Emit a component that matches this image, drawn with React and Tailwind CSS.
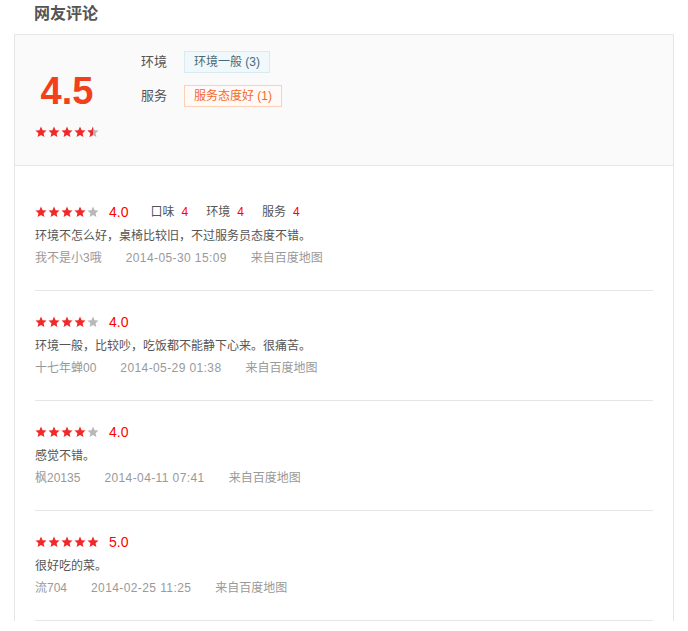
const reviews = [
  {
    score: 4,
    scores: [
      ['口味', 4],
      ['环境', 4],
      ['服务', 4],
    ],
    text: '环境不怎么好，桌椅比较旧，不过服务员态度不错。',
    user: '我不是小3哦',
    time: '2014-05-30 15:09',
  },
  {
    score: 4,
    text: '环境一般，比较吵，吃饭都不能静下心来。很痛苦。',
    user: '十七年蝉00',
    time: '2014-05-29 01:38',
  },
  {
    score: 4,
    text: '感觉不错。',
    user: '枫20135',
    time: '2014-04-11 07:41',
  },
  {
    score: 5,
    text: '很好吃的菜。',
    user: '流704',
    time: '2014-02-25 11:25',
  },
];

const STAR = 'M6 0.6l1.6 3.6 3.9 0.4-2.9 2.6 0.8 3.9L6 9.1 2.6 11.1l0.8-3.9L0.5 4.6l3.9-0.4z';

const Star = ({ fill = 1 }) => (
  <svg width="12" height="12" viewBox="0 0 12 12" className="block">
    <defs>
      <clipPath id="half">
        <rect x="0" y="0" width="6" height="12" />
      </clipPath>
    </defs>
    <path d={STAR} fill={fill === 1 ? '#f02a2a' : '#b8b8b8'} />
    {fill === 0.5 && <path d={STAR} fill="#f02a2a" clipPath="url(#half)" />}
  </svg>
);

const Stars = ({ value }) => (
  <div className="flex gap-[1px]">
    {[0, 1, 2, 3, 4].map(i => (
      <Star key={i} fill={value >= i + 1 ? 1 : value > i ? 0.5 : 0} />
    ))}
  </div>
);

const App = () => {
  return (
    <div
      className="bg-white min-h-[631px] text-[12px] text-[#555]"
      style={{ fontFamily: '"Liberation Sans", "Noto Sans CJK SC", sans-serif' }}
    >
      <div className="h-[34px] pl-[34px] pt-[4px] leading-[20px] text-[16px] font-bold text-[#555]">
        网友评论
      </div>

      <div className="ml-[14px] w-[660px] border-x border-t border-[#e6e6e6]">
        {/* summary */}
        <div className="flex h-[131px] bg-[#fafafa] border-b border-[#e6e6e6]">
          <div className="pl-5 w-[108px] pt-[37px] flex flex-col items-start">
            <div className="w-[64px] text-center text-[38px] leading-[38px] font-bold text-[#f2401c]">4.5</div>
            <div className="mt-[16px]">
              <Stars value={4.5} />
            </div>
          </div>
          <div className="pt-[16px] pl-[18px] flex flex-col gap-[12px]">
            <div className="flex items-center">
              <span className="w-[43px] text-[13px] text-[#555]">环境</span>
              <span className="h-[22px] leading-[20px] px-[9px] border border-[#d8eaf2] bg-[#f1f8fb] text-[#456a78]">
                环境一般 (3)
              </span>
            </div>
            <div className="flex items-center">
              <span className="w-[43px] text-[13px] text-[#555]">服务</span>
              <span className="h-[22px] leading-[20px] px-[9px] border border-[#fbd0b6] bg-[#fffaf7] text-[#f5692a]">
                服务态度好 (1)
              </span>
            </div>
          </div>
        </div>

        {/* list */}
        <div className="px-5 pt-[15px]">
          {reviews.map((r, i) => (
            <div key={i} className="pt-[21px] pb-[22px] border-b border-[#e6e6e6]">
              <div className="flex items-center h-[20px]">
                <Stars value={r.score} />
                <span className="ml-[10px] text-[14px] text-[#f00]">{r.score.toFixed(1)}</span>
                {r.scores && (
                  <div className="flex ml-[22px] gap-[18px] text-[12px]">
                    {r.scores.map(([k, v]) => (
                      <span key={k}>
                        <span className="text-[#555]">{k}</span>
                        <span className="ml-[7px] text-[#f00]">{v}</span>
                      </span>
                    ))}
                  </div>
                )}
              </div>
              <div className="mt-[4px] leading-[20px] text-[#555]">{r.text}</div>
              <div className="mt-[2px] leading-[20px] text-[#999] flex gap-[24px]">
                <span>{r.user}</span>
                <span className="tracking-[0.4px]">{r.time}</span>
                <span>来自百度地图</span>
              </div>
            </div>
          ))}
        </div>
      </div>
    </div>
  );
};

export default App;
